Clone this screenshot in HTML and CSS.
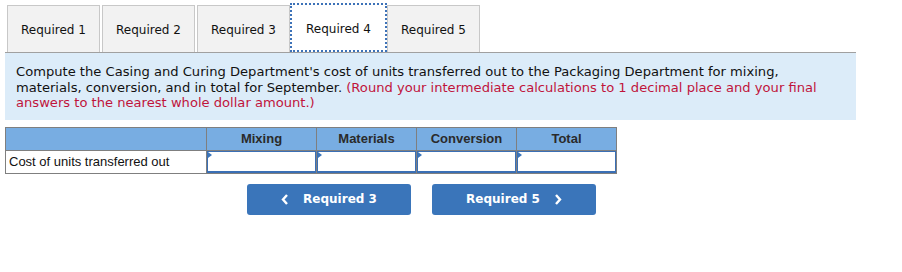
FILE: index.html
```html
<!DOCTYPE html>
<html lang="en">

<head>
    <meta charset="UTF-8">
    <title>Required 4</title>
    <link rel="stylesheet" href="styles.css">
</head>

<body>
    <div class="page">
        <div class="tabs">
            <div class="tab">Required 1</div>
            <div class="tab">Required 2</div>
            <div class="tab">Required 3</div>
            <div class="tab active">Required 4</div>
            <div class="tab">Required 5</div>
        </div>

        <div class="question">
            Compute the Casing and Curing Department's cost of units transferred out to the Packaging Department for mixing,
            materials, conversion, and in total for September.
            <span class="note">(Round your intermediate calculations to 1 decimal place and your final answers to the nearest whole dollar amount.)</span>
        </div>

        <table class="answer">
            <tr>
                <th class="label-col"></th>
                <th class="mix-col">Mixing</th>
                <th>Materials</th>
                <th>Conversion</th>
                <th>Total</th>
            </tr>
            <tr>
                <td class="label">Cost of units transferred out</td>
                <td class="cell"><input type="text"></td>
                <td class="cell"><input type="text"></td>
                <td class="cell"><input type="text"></td>
                <td class="cell"><input type="text"></td>
            </tr>
        </table>

        <div class="nav">
            <button class="nav-btn">
                <svg class="chev" width="8" height="11" viewBox="0 0 8 11"><polyline points="6,1 2,5.5 6,10" fill="none" stroke="white" stroke-width="2.4"/></svg>
                Required 3
            </button>
            <button class="nav-btn">
                Required 5
                <svg class="chev" width="8" height="11" viewBox="0 0 8 11"><polyline points="2,1 6,5.5 2,10" fill="none" stroke="white" stroke-width="2.4"/></svg>
            </button>
        </div>
    </div>
</body>

</html>
```

FILE: styles.css
```css
body {
    margin: 0;
    background-color: white;
    font-family: "DejaVu Sans", Verdana, sans-serif;
    color: #111;
}

.page {
    padding: 3px 0 0 5px;
}

.tabs {
    display: flex;
    align-items: flex-end;
    gap: 2px;
    width: 851px;
    padding-left: 2px;
    box-sizing: border-box;
    border-bottom: 1px solid #a0a0a0;
}

.tab {
    width: 93px;
    height: 47px;
    box-sizing: border-box;
    display: flex;
    align-items: center;
    justify-content: center;
    background-color: #f2f2f2;
    border: 1px solid #c8c8c8;
    border-bottom: none;
    font-size: 12px;
    padding-top: 1px;
}

.tab.active {
    width: 97px;
    height: 49px;
    margin: 0 -2px;
    background-color: white;
    border: 2px dotted #3d72b8;
    padding-top: 3px;
}

.question {
    width: 851px;
    box-sizing: border-box;
    background-color: #dcecf9;
    padding: 11px 24px 9px 11px;
    font-size: 13.1px;
    line-height: 15.5px;
}

.note {
    color: #c0143c;
}

.answer {
    margin-top: 7px;
    border-collapse: collapse;
    font-family: "Liberation Sans", Arial, sans-serif;
}

.answer th {
    background-color: #78ade2;
    border: 1px solid #7f7f7f;
    height: 22px;
    padding: 0;
    width: 99px;
    font-size: 13px;
    color: #2a2a2a;
}

.answer th.label-col {
    width: 200px;
}

.answer th.mix-col {
    width: 109px;
}

.answer td {
    border: 1px solid #7f7f7f;
    height: 22px;
    padding: 0;
}

.answer td.label {
    font-size: 13px;
    padding-left: 3px;
    text-align: left;
}

.answer td.cell {
    position: relative;
}

.cell input {
    display: block;
    width: 100%;
    height: 22px;
    box-sizing: border-box;
    border: 1px solid #3a6fb5;
    border-bottom-width: 2px;
    margin: 0;
    padding: 0;
}

.cell::before {
    content: "";
    position: absolute;
    left: 1px;
    top: 1px;
    border-top: 3px solid transparent;
    border-bottom: 3px solid transparent;
    border-left: 4px solid #3a75ba;
}

.nav {
    display: flex;
    gap: 21px;
    margin: 10px 0 0 242px;
}

.nav-btn {
    width: 164px;
    height: 31px;
    display: flex;
    align-items: center;
    justify-content: center;
    gap: 14px;
    background-color: #3a75ba;
    color: white;
    border: none;
    border-radius: 3px;
    font-family: "DejaVu Sans", Tahoma, sans-serif;
    font-size: 12px;
    font-weight: bold;
    cursor: pointer;
}
```
